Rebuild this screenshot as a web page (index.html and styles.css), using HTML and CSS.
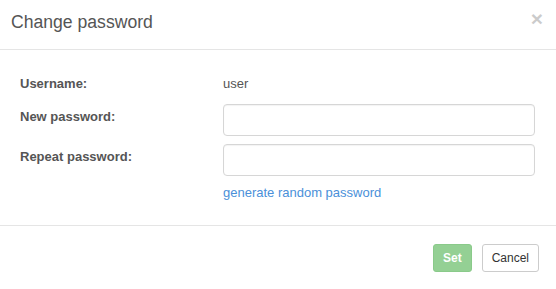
FILE: index.html
```html
<!DOCTYPE html>
<html lang="en">
<head>
    <meta charset="UTF-8">
    <meta name="viewport" content="width=device-width, initial-scale=1.0">
    <title>Change password</title>
    <link rel="stylesheet" href="styles.css">
</head>
<body>
    <div class="modal-content">
        <div class="modal-header">
            <h4 class="modal-title">Change password</h4>
            <button class="close" type="button">&times;</button>
        </div>

        <div class="modal-body">
            <div class="form-row static-row">
                <label class="control-label">Username:</label>
                <div class="form-static">user</div>
            </div>
            <div class="form-row">
                <label class="control-label" for="newPassword">New password:</label>
                <input class="form-control" type="password" id="newPassword">
            </div>
            <div class="form-row">
                <label class="control-label" for="repeatPassword">Repeat password:</label>
                <input class="form-control" type="password" id="repeatPassword">
            </div>
            <div class="form-row link-row">
                <span></span>
                <a href="#" class="generate-link">generate random password</a>
            </div>
        </div>

        <div class="modal-footer">
            <button class="btn btn-success" type="button" disabled>Set</button>
            <button class="btn btn-default" type="button">Cancel</button>
        </div>
    </div>
</body>
</html>
```

FILE: styles.css
```css
:root {
    --text-color: #555;
    --border-color: #e5e5e5;
    --link-color: #4a90d9;
}
* {
    box-sizing: border-box;
}
body {
    font-family: "Liberation Sans", Arial, Helvetica, sans-serif;
    font-size: 13px;
    color: var(--text-color);
    background-color: #fff;
    margin: 0;
    padding: 0;
}
.modal-content {
    width: 556px;
    height: 289px;
    background-color: #fff;
}
.modal-header {
    display: flex;
    justify-content: space-between;
    align-items: flex-start;
    height: 50px;
    padding: 12px 13px 0 11px;
    border-bottom: 1px solid var(--border-color);
}
.modal-title {
    margin: 0;
    font-size: 17.6px;
    font-weight: normal;
    line-height: 20px;
    color: #555;
}
.close {
    margin-top: -4px;
    padding: 0;
    border: 0;
    background: none;
    font-family: "Liberation Sans", Arial, sans-serif;
    font-size: 21px;
    font-weight: bold;
    line-height: 1;
    color: #000;
    opacity: 0.2;
    cursor: pointer;
}
.modal-body {
    display: flex;
    flex-direction: column;
    gap: 8px;
    padding: 26px 21px 25px 20px;
}
.form-row {
    display: grid;
    grid-template-columns: 203px 1fr;
    align-items: start;
}
.static-row {
    margin-bottom: 4px;
}
.link-row {
    margin-top: 2px;
}
.control-label {
    font-weight: bold;
    line-height: 16px;
    padding-top: 5px;
}
.static-row .control-label {
    padding-top: 0;
}
.form-static {
    line-height: 16px;
}
.form-control {
    width: 100%;
    height: 32px;
    padding: 6px 10px;
    font-family: inherit;
    font-size: 13px;
    color: #555;
    background-color: #fff;
    border: 1px solid #d6d6d6;
    border-radius: 4px;
    box-shadow: inset 0 1px 1px rgba(0,0,0,0.05);
}
.generate-link {
    line-height: 14px;
    color: var(--link-color);
    text-decoration: none;
}
.modal-footer {
    display: flex;
    justify-content: flex-end;
    gap: 10px;
    padding: 18px 17px 17px;
    border-top: 1px solid var(--border-color);
}
.btn {
    height: 28px;
    padding: 4px 9px;
    font-family: inherit;
    font-size: 12px;
    line-height: 18px;
    border: 1px solid transparent;
    border-radius: 3px;
    cursor: pointer;
}
.btn-success {
    color: #fff;
    font-weight: bold;
    background-color: #5cb85c;
    border-color: #4cae4c;
    opacity: 0.65;
}
.btn-success:disabled {
    cursor: not-allowed;
}
.btn-default {
    color: #333;
    background-color: #fff;
    border-color: #ccc;
}
```
